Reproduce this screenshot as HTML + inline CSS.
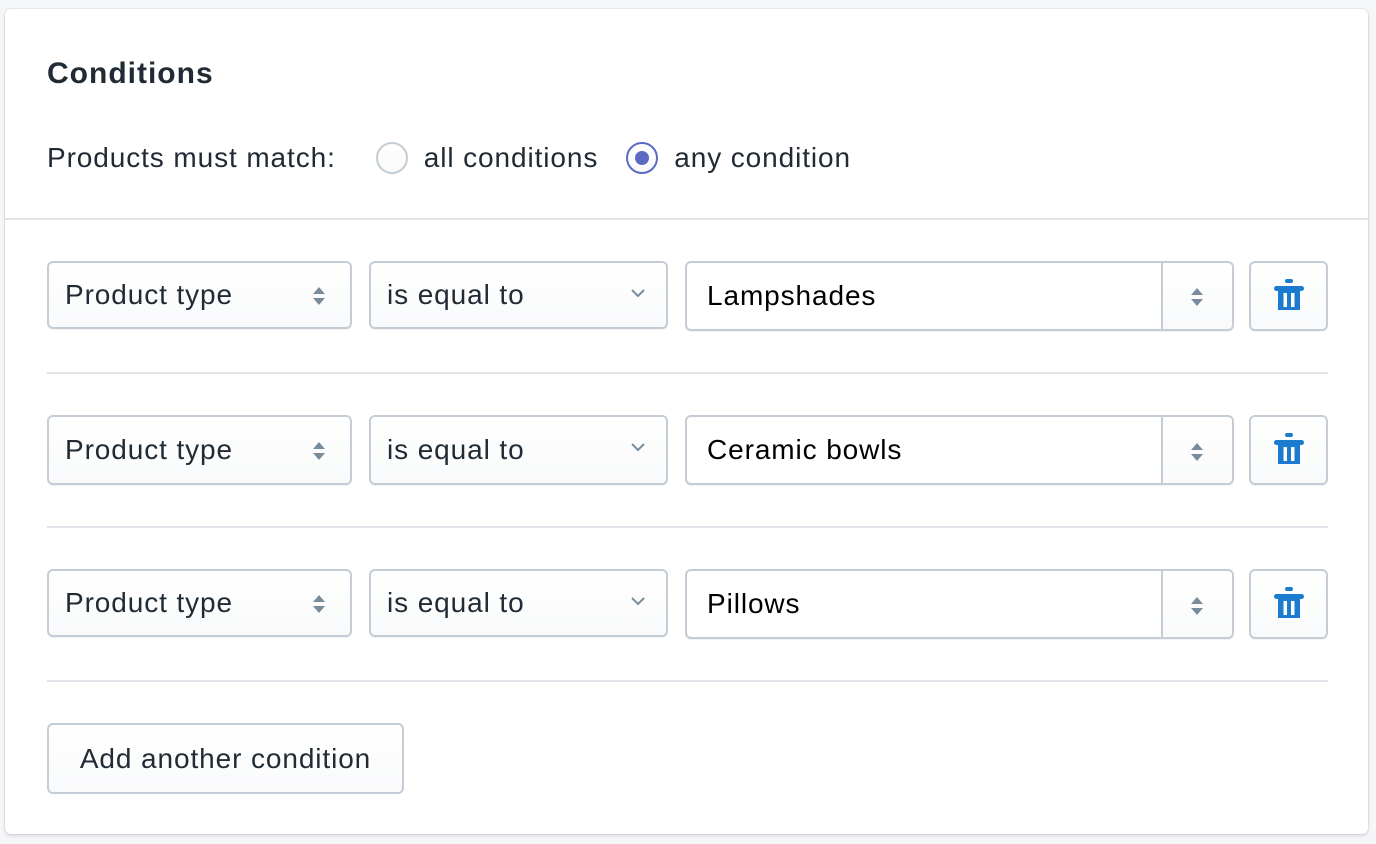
<!DOCTYPE html>
<html><head><style>
*{box-sizing:border-box;margin:0;padding:0}
body{width:1376px;height:844px;background:#f4f6f8;font-family:"Liberation Sans",sans-serif;color:#212b36;position:relative;overflow:hidden}
.card{position:absolute;left:5px;top:9px;width:1363px;height:825px;background:#fff;border-radius:6px;box-shadow:0 0 0 1px rgba(63,63,68,.07),0 2px 3px rgba(63,63,68,.15)}
h2{position:absolute;left:42px;top:48px;font-size:30px;letter-spacing:1px;font-weight:bold;color:#212b36}
.match{position:absolute;left:42px;top:133px;font-size:28px;letter-spacing:0.9px;color:#212b36;display:flex;align-items:center;height:32px}
.radio{width:32px;height:32px;border-radius:50%;border:2px solid #c4cdd5;background:linear-gradient(#fff,#f9fafb);display:inline-block;margin-right:16px;position:relative}
.radio.on{border-color:#5c6ac4}
.radio.on::after{content:"";position:absolute;left:7px;top:7px;width:14px;height:14px;border-radius:50%;background:#5c6ac4}
.hr{position:absolute;left:0;right:0;top:209px;height:2px;background:#dfe3e8}
.rhr{position:absolute;left:42px;width:1281px;height:2px;background:#dfe3e8}
.sel{position:absolute;height:68px;border:2px solid #c4cdd5;border-radius:6px;background:linear-gradient(#fff,#f9fafb);font-size:28px;letter-spacing:0.9px;display:flex;align-items:center;padding-left:16px;box-shadow:0 1px 0 rgba(22,29,37,.05)}
.in{background:#fff;color:#000;padding-left:20px}
.step{position:absolute;right:0;top:0;bottom:0;width:71px;border-left:2px solid #c4cdd5;background:linear-gradient(#fff,#f9fafb);border-radius:0 6px 6px 0}
.ico{position:absolute}
.btn{position:absolute;left:42px;top:714px;width:357px;height:71px;border:2px solid #c4cdd5;border-radius:6px;background:linear-gradient(#fff,#f9fafb);font-size:28px;letter-spacing:0.9px;display:flex;align-items:center;justify-content:center}
</style></head><body>
<div class="card">
<h2>Conditions</h2>
<div class="match">Products must match:<span style="width:40px"></span><span class="radio"></span>all conditions<span style="width:28px"></span><span class="radio on"></span>any condition</div>
<div class="hr"></div>

<div class="sel" style="left:42px;top:252px;width:305px">Product type<svg class="ico" style="left:262px;top:22px" width="16" height="22" viewBox="0 0 16 22"><path d="M8 2 L14 9 H2Z M8 20 L14 13 H2Z" fill="#798c9c"/></svg></div>
<div class="sel" style="left:364px;top:252px;width:299px">is equal to<svg class="ico" style="left:258px;top:24px" width="18" height="12" viewBox="0 0 18 12"><path d="M3 3 L9 9 L15 3" stroke="#798c9c" stroke-width="2" fill="none"/></svg></div>
<div class="sel in" style="left:680px;top:252px;width:549px;height:70px">Lampshades<div class="step"><svg class="ico" style="left:26px;top:23px" width="16" height="22" viewBox="0 0 16 22"><path d="M8 2 L14 9 H2Z M8 20 L14 13 H2Z" fill="#798c9c"/></svg></div></div>
<div class="sel" style="left:1244px;top:252px;width:79px;height:70px;padding:0;justify-content:center"><svg width="30" height="34" viewBox="0 0 30 34"><rect x="11" y="0" width="8" height="4" rx="2" fill="#1a7bcf"/><rect x="0" y="7" width="30" height="5" rx="2.5" fill="#1a7bcf"/><path d="M4 11 H26 V31 H4Z M9.5 14 V28 H13 V14Z M17 14 V28 H20.5 V14Z" fill="#1a7bcf" fill-rule="evenodd"/></svg></div>
<div class="rhr" style="top:363px"></div>

<div class="sel" style="left:42px;top:406px;width:305px;height:70px">Product type<svg class="ico" style="left:262px;top:23px" width="16" height="22" viewBox="0 0 16 22"><path d="M8 2 L14 9 H2Z M8 20 L14 13 H2Z" fill="#798c9c"/></svg></div>
<div class="sel" style="left:364px;top:406px;width:299px;height:70px">is equal to<svg class="ico" style="left:258px;top:24px" width="18" height="12" viewBox="0 0 18 12"><path d="M3 3 L9 9 L15 3" stroke="#798c9c" stroke-width="2" fill="none"/></svg></div>
<div class="sel in" style="left:680px;top:406px;width:549px;height:70px">Ceramic bowls<div class="step"><svg class="ico" style="left:26px;top:24px" width="16" height="22" viewBox="0 0 16 22"><path d="M8 2 L14 9 H2Z M8 20 L14 13 H2Z" fill="#798c9c"/></svg></div></div>
<div class="sel" style="left:1244px;top:406px;width:79px;height:70px;padding:0;justify-content:center"><svg width="30" height="34" viewBox="0 0 30 34"><rect x="11" y="0" width="8" height="4" rx="2" fill="#1a7bcf"/><rect x="0" y="7" width="30" height="5" rx="2.5" fill="#1a7bcf"/><path d="M4 11 H26 V31 H4Z M9.5 14 V28 H13 V14Z M17 14 V28 H20.5 V14Z" fill="#1a7bcf" fill-rule="evenodd"/></svg></div>
<div class="rhr" style="top:517px"></div>

<div class="sel" style="left:42px;top:560px;width:305px">Product type<svg class="ico" style="left:262px;top:22px" width="16" height="22" viewBox="0 0 16 22"><path d="M8 2 L14 9 H2Z M8 20 L14 13 H2Z" fill="#798c9c"/></svg></div>
<div class="sel" style="left:364px;top:560px;width:299px">is equal to<svg class="ico" style="left:258px;top:24px" width="18" height="12" viewBox="0 0 18 12"><path d="M3 3 L9 9 L15 3" stroke="#798c9c" stroke-width="2" fill="none"/></svg></div>
<div class="sel in" style="left:680px;top:560px;width:549px;height:70px">Pillows<div class="step"><svg class="ico" style="left:26px;top:24px" width="16" height="22" viewBox="0 0 16 22"><path d="M8 2 L14 9 H2Z M8 20 L14 13 H2Z" fill="#798c9c"/></svg></div></div>
<div class="sel" style="left:1244px;top:560px;width:79px;height:70px;padding:0;justify-content:center"><svg width="30" height="34" viewBox="0 0 30 34"><rect x="11" y="0" width="8" height="4" rx="2" fill="#1a7bcf"/><rect x="0" y="7" width="30" height="5" rx="2.5" fill="#1a7bcf"/><path d="M4 11 H26 V31 H4Z M9.5 14 V28 H13 V14Z M17 14 V28 H20.5 V14Z" fill="#1a7bcf" fill-rule="evenodd"/></svg></div>
<div class="rhr" style="top:671px"></div>

<div class="btn">Add another condition</div>
</div>
</body></html>
